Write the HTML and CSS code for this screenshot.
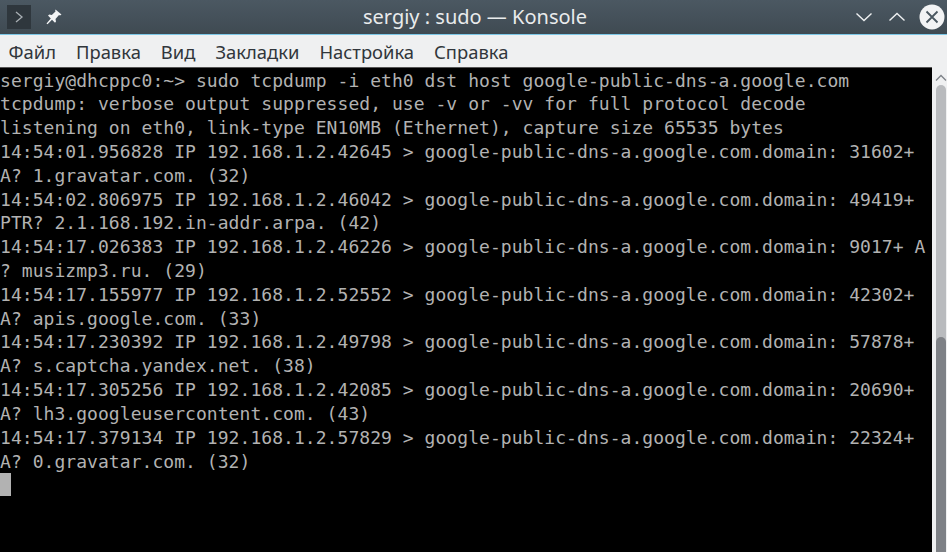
FILE: index.html
```html
<!DOCTYPE html>
<html lang="ru">
<head>
<meta charset="utf-8">
<title>sergiy : sudo — Konsole</title>
<link rel="stylesheet" href="styles.css">
</head>
<body>
<div class="window">
  <header class="titlebar">
    <div class="title-left">
      <span class="menu-btn"><svg width="10" height="14" viewBox="0 0 10 14"><path d="M2 2l6 5-6 5" fill="none" stroke="#a9afb4" stroke-width="1.300"/></svg></span>
      <svg class="pin" width="18" height="18" viewBox="0 0 18 18"><path d="M10.500 1.500l6 5-1.500 1-1-.5-3.500 4 .5 2.500-1 1.200-3-3-4.500 4.500-1-.8 4.300-4.800-2.800-3 1.300-1 2.500.5 3.700-3.600-.3-1.200z" fill="#f4f5f6"/></svg>
    </div>
    <div class="title">sergiy : sudo — Konsole</div>
    <div class="controls">
      <svg width="18" height="12" viewBox="0 0 18 12"><path d="M1.500 2.500l7.500 7 7.500-7" fill="none" stroke="#eef0f1" stroke-width="1.400"/></svg>
      <svg width="18" height="12" viewBox="0 0 18 12"><path d="M1.500 9.500l7.500-7 7.500 7" fill="none" stroke="#eef0f1" stroke-width="1.400"/></svg>
      <svg width="26" height="26" viewBox="0 0 26 26"><circle cx="13" cy="13" r="12.500" fill="#f2f3f4"/><path d="M7.500 7.500l11 11M18.500 7.500l-11 11" stroke="#4a5760" stroke-width="1.800"/></svg>
    </div>
  </header>
  <nav class="menubar">
    <span>Файл</span><span>Правка</span><span>Вид</span><span>Закладки</span><span>Настройка</span><span>Справка</span>
  </nav>
  <main class="content">
    <pre class="terminal">sergiy@dhcppc0:~&gt; sudo tcpdump -i eth0 dst host google-public-dns-a.google.com
tcpdump: verbose output suppressed, use -v or -vv for full protocol decode
listening on eth0, link-type EN10MB (Ethernet), capture size 65535 bytes
14:54:01.956828 IP 192.168.1.2.42645 &gt; google-public-dns-a.google.com.domain: 31602+
A? 1.gravatar.com. (32)
14:54:02.806975 IP 192.168.1.2.46042 &gt; google-public-dns-a.google.com.domain: 49419+
PTR? 2.1.168.192.in-addr.arpa. (42)
14:54:17.026383 IP 192.168.1.2.46226 &gt; google-public-dns-a.google.com.domain: 9017+ A
? musizmp3.ru. (29)
14:54:17.155977 IP 192.168.1.2.52552 &gt; google-public-dns-a.google.com.domain: 42302+
A? apis.google.com. (33)
14:54:17.230392 IP 192.168.1.2.49798 &gt; google-public-dns-a.google.com.domain: 57878+
A? s.captcha.yandex.net. (38)
14:54:17.305256 IP 192.168.1.2.42085 &gt; google-public-dns-a.google.com.domain: 20690+
A? lh3.googleusercontent.com. (43)
14:54:17.379134 IP 192.168.1.2.57829 &gt; google-public-dns-a.google.com.domain: 22324+
A? 0.gravatar.com. (32)
<span class="cursor"></span></pre>
    <aside class="scrollbar">
      <svg class="arrow" width="12" height="8" viewBox="0 0 12 8"><path d="M1 6.500l5-5 5 5" fill="none" stroke="#7d8287" stroke-width="1.300"/></svg>
      <div class="track"><div class="thumb"></div></div>
    </aside>
  </main>
</div>
</body>
</html>
```
FILE: styles.css
```css
* { box-sizing: border-box; }
html, body { margin: 0; height: 100%; overflow: hidden; }
body { background: #eff0f1; }
.window { width: 947px; height: 552px; display: flex; flex-direction: column; }
.titlebar {
  height: 35px; flex: none; display: flex; align-items: center; justify-content: space-between;
  position: relative; padding: 0 2px 0 7px;
  background: linear-gradient(#4b5862, #3f4a52);
  border-bottom: 1px solid #7cc7e6;
}
.title-left { display: flex; align-items: center; gap: 14px; }
.menu-btn { width: 24px; height: 24px; background: #2f373d; display: flex; align-items: center; justify-content: center; }
.title {
  position: absolute; left: 0; right: 0; text-align: center; padding-left: 3px;
  font: 20px/30px "Noto Sans", sans-serif; color: #e9ebec;
}
.controls { display: flex; align-items: center; gap: 15px; position: relative; }
.controls svg:nth-child(2) { margin-right: -2px; }
.menubar {
  height: 32px; flex: none; display: flex; align-items: center; gap: 20px; padding: 0 8.5px;
  font: 18.400px "Noto Sans", sans-serif; color: #31363b; background: #eff0f1;
}
.content { flex: 1; display: flex; min-height: 0; }
.terminal {
  width: 932px; margin: 0; background: #000; color: #b2b2b2; padding: 0.500px 0 0 0;
  font: 18px/23.810px "DejaVu Sans Mono", monospace; letter-spacing: 0.050px; overflow: hidden;
  border-top: 1px solid #555;
}
.cursor { display: inline-block; width: 11px; height: 23px; background: #b2b2b2; vertical-align: top; }
.scrollbar { flex: 1; display: flex; flex-direction: column; align-items: flex-end; padding: 7px 1px 0 0; gap: 3px; background: #eff0f1; }
.arrow { flex: none; margin-right: -1px; }
.track { width: 10px; flex: 1; background: #b9bbbe; border-radius: 5px 5px 0 0; display: flex; flex-direction: column; justify-content: flex-end; }
.thumb { height: 215px; background: #7e8186; border-radius: 5px 5px 0 0; }
```
